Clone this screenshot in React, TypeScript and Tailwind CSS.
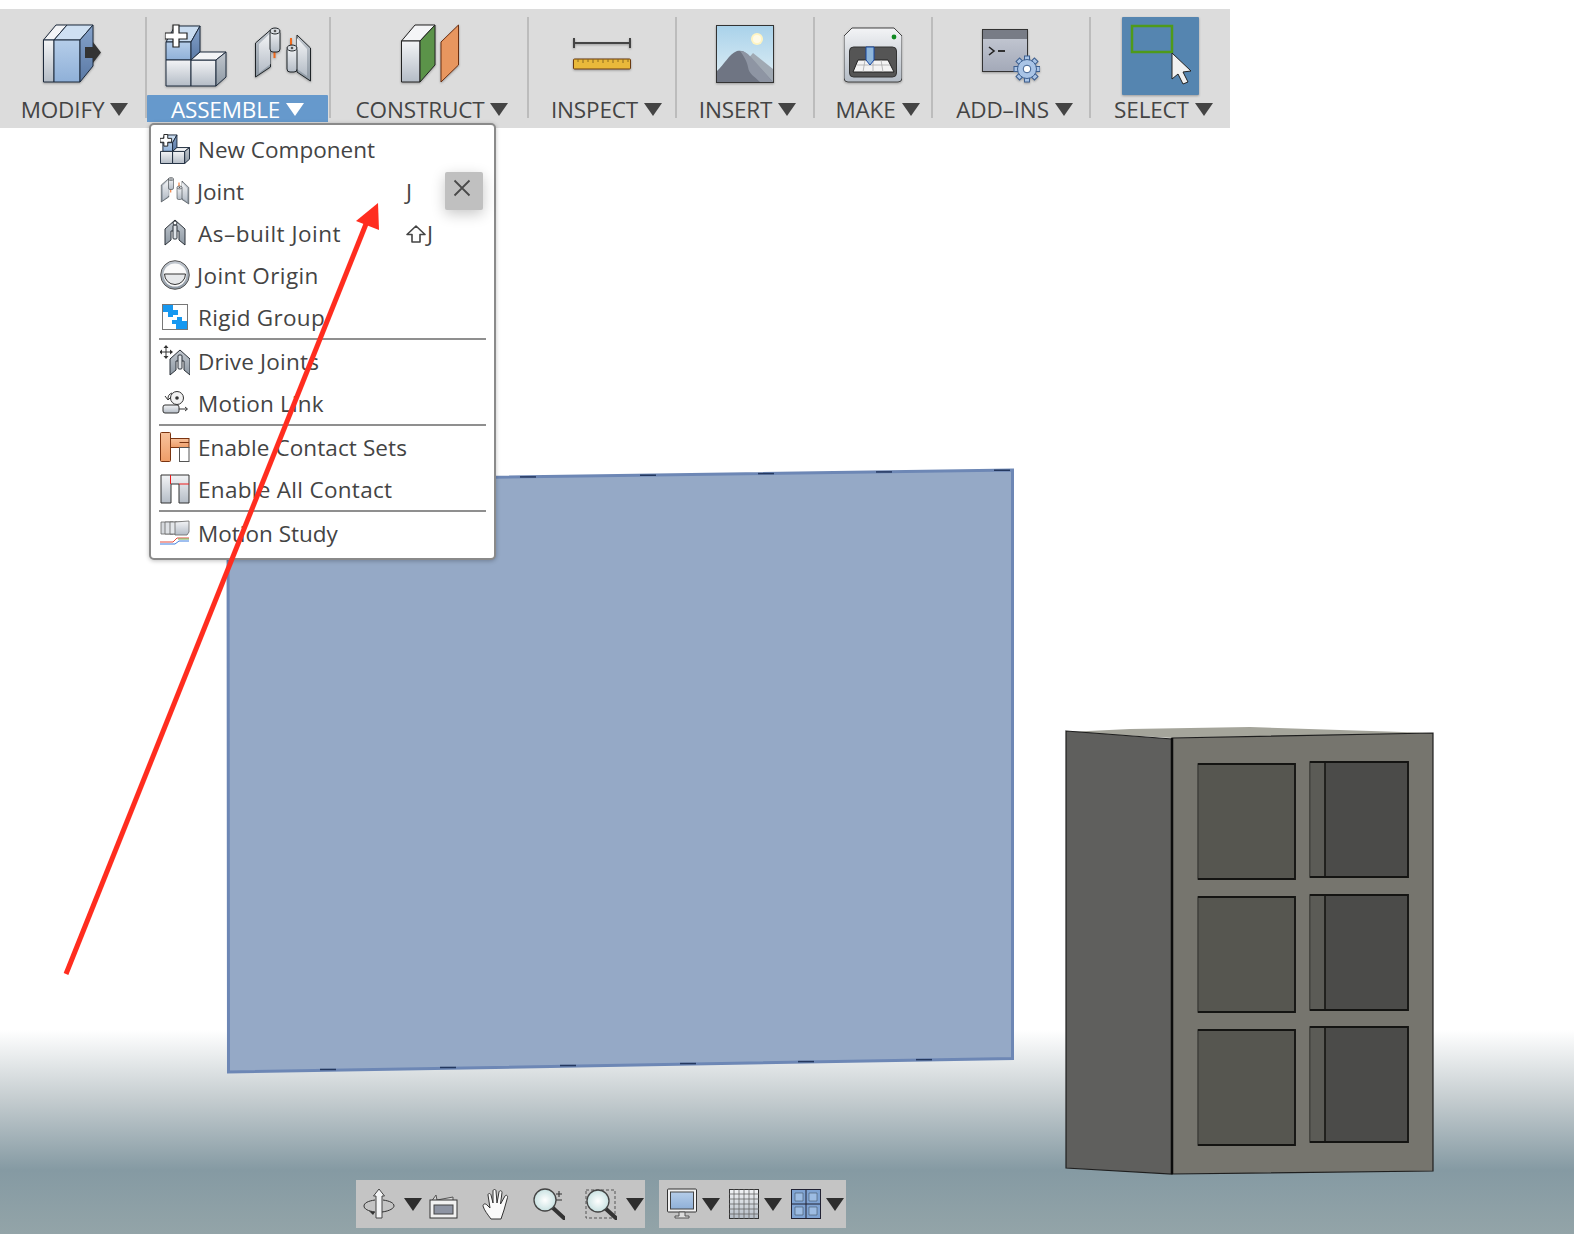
import type { ReactNode } from "react";

const labelFont = "font-['Open_Sans','Noto_Sans',sans-serif]";

function Defs() {
  return (
    <svg className="absolute h-0 w-0">
      <defs>
        <linearGradient id="steel" x1="0" y1="0" x2="0" y2="1">
          <stop offset="0" stopColor="#f3f4f6" />
          <stop offset="1" stopColor="#b4bcc6" />
        </linearGradient>
        <linearGradient id="steelSide" x1="0" y1="0" x2="0" y2="1">
          <stop offset="0" stopColor="#c2c8cf" />
          <stop offset="1" stopColor="#8d98a3" />
        </linearGradient>
        <linearGradient id="blueFace" x1="0" y1="0" x2="0" y2="1">
          <stop offset="0" stopColor="#b5cde9" />
          <stop offset="1" stopColor="#8fb0d8" />
        </linearGradient>
        <linearGradient id="blueSide" x1="0" y1="0" x2="0" y2="1">
          <stop offset="0" stopColor="#86a3cb" />
          <stop offset="1" stopColor="#5a79a5" />
        </linearGradient>
        <linearGradient id="sky" x1="0" y1="0" x2="0" y2="1">
          <stop offset="0" stopColor="#a9d2ea" />
          <stop offset="1" stopColor="#e0eff5" />
        </linearGradient>
        <linearGradient id="addin" x1="0" y1="0" x2="0" y2="1">
          <stop offset="0" stopColor="#c8ccd6" />
          <stop offset="1" stopColor="#a3a9b8" />
        </linearGradient>
        <linearGradient id="orange" x1="0" y1="0" x2="0" y2="1">
          <stop offset="0" stopColor="#f7c29c" />
          <stop offset="1" stopColor="#ee9d68" />
        </linearGradient>
        <radialGradient id="lens">
          <stop offset="0" stopColor="#ffffff" />
          <stop offset="1" stopColor="#c9e2e2" />
        </radialGradient>
      </defs>
    </svg>
  );
}

function Tri({ className = "" }: { className?: string }) {
  return (
    <svg width="18" height="13" viewBox="0 0 18 13" className={className}>
      <polygon points="0,0 18,0 9,13" fill="currentColor" />
    </svg>
  );
}

function Plates({ s = "#1f2428" }: { s?: string }) {
  return (
    <g stroke={s} strokeWidth="1" strokeLinejoin="round">
      <polygon points="0.5,26 15.5,13 15.5,50 0.5,60" fill="url(#steelSide)" />
      <polygon points="4,27 15.5,16 15.5,47 4,56" fill="url(#steel)" stroke="none" />
      <path d="M19.5 35v6" stroke="#f0691c" strokeWidth="2" />
      <rect x="15" y="13" width="10" height="22" rx="3" fill="url(#steel)" />
      <ellipse cx="20" cy="14" rx="5" ry="3" fill="#d9dde2" />
      <circle cx="20" cy="14" r="1.3" fill="#555" stroke="none" />
      <polygon points="42,18 55.5,31 55.5,64 42,55" fill="url(#steelSide)" />
      <polygon points="42,21 52,32 52,59 42,52" fill="url(#steel)" stroke="none" />
      <path d="M36 21v9" stroke="#f0691c" strokeWidth="2" />
      <rect x="32" y="30" width="10" height="25" rx="3" fill="url(#steel)" />
      <ellipse cx="37" cy="31" rx="5" ry="3" fill="#d9dde2" />
      <circle cx="37" cy="31" r="1.3" fill="#555" stroke="none" />
    </g>
  );
}

function ModifyIcon() {
  return (
    <svg width="60" height="78" viewBox="0 0 60 78">
      <g stroke="#1d2a3c" strokeWidth="1" strokeLinejoin="round">
        <polygon points="0.5,23 11,23 24,8 13,8" fill="#f4f5f7" />
        <rect x="0.5" y="23" width="10.5" height="42" fill="url(#steel)" />
        <polygon points="11,23 37,23 50,8 24,8" fill="#cfe0f2" />
        <rect x="11" y="23" width="26" height="42" fill="url(#blueFace)" />
        <polygon points="37,23 50,8 50,49 37,65" fill="url(#blueSide)" />
      </g>
      <polygon points="42,30 50,30 50,25 58,35.5 50,46 50,41 42,41" fill="#333" />
    </svg>
  );
}

function NewComponentIcon() {
  return (
    <svg width="62" height="78" viewBox="0 0 62 78">
      <g stroke="#1d2a3c" strokeWidth="1" strokeLinejoin="round">
        <polygon points="1,25 26,25 35,9 10,9" fill="#c9dcf0" />
        <rect x="1" y="25" width="25" height="18" fill="url(#blueFace)" />
        <polygon points="26,25 35,9 35,35 26,43" fill="url(#blueSide)" />
        <rect x="1" y="43" width="25" height="26" fill="url(#steel)" />
        <rect x="26" y="43" width="25" height="26" fill="url(#steel)" />
        <polygon points="26,43 35,35 61,35 51,43" fill="#f3f4f6" />
        <polygon points="51,43 61,35 61,60 51,69" fill="url(#steelSide)" />
      </g>
      <path d="M8 8h6v8h8v6h-8v8H8v-8H0v-6h8z" fill="#fff" stroke="#222" strokeWidth="1.2" />
    </svg>
  );
}

function JointIcon() {
  return (
    <svg width="56" height="78" viewBox="0 0 56 78">
      <Plates />
    </svg>
  );
}

function ConstructIcon() {
  return (
    <svg width="60" height="78" viewBox="-2 0 60 78">
      <g stroke="#222" strokeWidth="1" strokeLinejoin="round">
        <polygon points="0.5,24 19,24 34,8 14,8" fill="#f4f5f7" />
        <rect x="0.5" y="24" width="18.5" height="41" fill="url(#steel)" />
        <polygon points="19,24 34,8 34,48 19,65" fill="#5b9349" />
        <polygon points="40,25 57.5,8 57.5,48 40,65" fill="#e8965f" stroke="#6b2e10" />
      </g>
    </svg>
  );
}

function InspectIcon() {
  return (
    <svg width="58" height="78" viewBox="0 0 58 78">
      <path d="M1 21v10M57 21v10M1 26h56" stroke="#444" strokeWidth="2" fill="none" />
      <rect x="0.5" y="42" width="57" height="10" rx="1" fill="#e9b93a" stroke="#6b3a10" />
      <path
        d="M5 42v3M10 42v4M15 42v3M20 42v4M25 42v3M30 42v4M35 42v3M40 42v4M45 42v3M50 42v4M55 42v3"
        stroke="#8a6a20"
        strokeWidth="1"
      />
    </svg>
  );
}

function InsertIcon() {
  return (
    <svg width="58" height="78" viewBox="0 0 58 78">
      <rect x="0.5" y="8.5" width="57" height="57" fill="url(#sky)" stroke="#333" />
      <circle cx="41" cy="22" r="6" fill="#fff4c2" />
      <circle cx="41" cy="22" r="4" fill="#fffbe8" />
      <polygon points="30,44 37,36 57,52 57,65 46,65" fill="#a0a9b3" />
      <path d="M1 54c7-6 12-17 20-20 4-1 7 0 10 3l26 28H1z" fill="#6f7583" />
      <path d="M24 34c5 0 8 3 11 6l22 25H44c-6-6-11-8-12-15-1-6-5-12-8-16z" fill="#8e95a3" />
    </svg>
  );
}

function MakeIcon() {
  return (
    <svg width="58" height="78" viewBox="0 0 58 78">
      <path
        d="M8 11h42l8 8v42a4 4 0 0 1-4 4H4a4 4 0 0 1-4-4V19z"
        fill="url(#steel)"
        stroke="#444"
        strokeWidth="1"
      />
      <rect x="5.5" y="30" width="47" height="30" rx="4" fill="#555" stroke="#333" />
      <polygon points="14,43 44,43 50,55 9,55" fill="#f3f3f3" stroke="#222" />
      <path d="M13 48h33M21 43l-2 12M29 43v12M37 43l2 12" stroke="#aaa" strokeWidth="0.8" />
      <polygon points="22,30 30,30 30,43 26,48 22,43" fill="#8fb6da" stroke="#1746a0" strokeWidth="1" />
      <circle cx="50" cy="20" r="2.4" fill="#118a22" />
    </svg>
  );
}

function AddInsIcon() {
  const teeth = [0, 45, 90, 135, 180, 225, 270, 315];
  return (
    <svg width="58" height="78" viewBox="0 0 58 78">
      <rect x="0.5" y="12.5" width="45" height="42" fill="url(#addin)" stroke="#333" />
      <rect x="1" y="13" width="44" height="9" fill="#787c86" />
      <path d="M7 30l5 4-5 4" stroke="#222" strokeWidth="1.6" fill="none" />
      <path d="M16 34h7" stroke="#222" strokeWidth="1.8" />
      <g transform="translate(45 52)" fill="#a9c4e6" stroke="#3d5f8f" strokeWidth="1">
        {teeth.map((a) => (
          <rect key={a} x="-2.5" y="-13" width="5" height="6" transform={`rotate(${a})`} />
        ))}
        <circle r="9.5" />
        <circle r="3.8" fill="#fff" />
      </g>
    </svg>
  );
}

function SelectIcon() {
  return (
    <div className="h-[78px] w-[77px] rounded-[1px] bg-[#5585b0]">
      <svg width="77" height="78" viewBox="0 0 77 78">
        <rect x="10" y="9" width="40" height="26" fill="none" stroke="#4f9a1a" strokeWidth="2.5" />
        <path
          d="M50 36v26l6-5 5 10 5-2-5-10 8-1z"
          fill="#f1f1f1"
          stroke="#222"
          strokeWidth="1"
        />
      </svg>
    </div>
  );
}

function Group({
  className,
  nudge = "",
  label,
  active,
  first,
  children,
}: {
  className: string;
  nudge?: string;
  label: string;
  active?: boolean;
  first?: boolean;
  children: ReactNode;
}) {
  return (
    <div className={`relative flex shrink-0 flex-col ${className}`}>
      {!first && <div className="absolute left-[-1px] top-[8px] h-[101px] w-[2px] bg-[#bcbcbc]" />}
      <div className="mt-[8px] flex h-[78px] items-start justify-center gap-[28px] drop-shadow-[0_1px_1px_rgba(0,0,0,0.3)]">
        {children}
      </div>
      <div
        className={`ml-[1px] mr-[2px] flex h-[27px] items-center justify-center gap-[6px] rounded-t-[1px] pt-[4px] ${nudge} ${
          active ? "bg-[#6699cc] text-white" : "text-[#444]"
        }`}
      >
        <span className={`text-[22.5px] leading-none tracking-[-0.15px] ${labelFont}`}>{label}</span>
        <Tri className="mb-[3px]" />
      </div>
    </div>
  );
}

function Toolbar() {
  return (
    <div className="mt-[9px] flex h-[119px] w-[1230px] bg-[#dcdcdc]">
      <Group className="w-[146px]" nudge="pl-[4px]" label="MODIFY" first>
        <ModifyIcon />
      </Group>
      <Group className="w-[184px]" label="ASSEMBLE" active>
        <NewComponentIcon />
        <JointIcon />
      </Group>
      <Group className="w-[198px]" nudge="pl-[7px]" label="CONSTRUCT">
        <ConstructIcon />
      </Group>
      <Group className="w-[148px]" nudge="pl-[10px]" label="INSPECT">
        <InspectIcon />
      </Group>
      <Group className="w-[138px]" nudge="pl-[6px]" label="INSERT">
        <InsertIcon />
      </Group>
      <Group className="w-[118px]" nudge="pl-[10px]" label="MAKE">
        <MakeIcon />
      </Group>
      <Group className="w-[158px]" nudge="pl-[8px]" label="ADD–INS">
        <AddInsIcon />
      </Group>
      <Group className="w-[140px]" nudge="pl-[8px]" label="SELECT">
        <SelectIcon />
      </Group>
    </div>
  );
}

const miniStroke = { stroke: "#2b3138", strokeWidth: 1 };

function MiniNew() {
  return (
    <svg width="30" height="30" viewBox="0 0 62 62">
      <g stroke="#1d2a3c" strokeWidth="2" strokeLinejoin="round">
        <polygon points="1,18 26,18 35,2 10,2" fill="#c9dcf0" />
        <rect x="6" y="18" width="20" height="18" fill="url(#blueFace)" />
        <polygon points="26,18 35,2 35,28 26,36" fill="url(#blueSide)" />
        <rect x="1" y="36" width="25" height="25" fill="url(#steel)" />
        <rect x="26" y="36" width="25" height="25" fill="url(#steel)" />
        <polygon points="26,36 35,28 61,28 51,36" fill="#f3f4f6" />
        <polygon points="51,36 61,28 61,52 51,61" fill="url(#steelSide)" />
      </g>
      <path d="M8 1h8v8h8v8h-8v8H8v-8H0V9h8z" fill="#fff" stroke="#222" strokeWidth="2" />
    </svg>
  );
}

function MiniJoint() {
  return (
    <svg width="30" height="30" viewBox="0 8 56 60">
      <Plates />
    </svg>
  );
}

function MiniAsBuilt() {
  return (
    <svg width="26" height="30" viewBox="3 0 24 30">
      <g {...miniStroke} strokeLinejoin="round">
        <polygon points="5,11 15,2 25,11 25,27 19,22 19,13 11,13 11,22 5,27" fill="url(#steelSide)" />
        <rect x="13" y="7" width="4" height="14" rx="1" fill="#dfe3e7" />
        <circle cx="15" cy="5" r="2" fill="#fff" />
      </g>
    </svg>
  );
}

function MiniOrigin() {
  return (
    <svg width="30" height="30" viewBox="0 0 30 30">
      <circle cx="15" cy="15" r="14.3" fill="url(#steelSide)" stroke="#555" />
      <circle cx="15" cy="15" r="11.5" fill="#fafafa" />
      <path d="M4.500 14h21a10.500 10.500 0 0 1-21 0z" fill="#e6e8ea" stroke="#333" />
    </svg>
  );
}

function MiniRigid() {
  return (
    <svg width="28" height="28" viewBox="1 1 28 28">
      <rect x="2.5" y="2.5" width="25" height="25" fill="#fff" stroke="#777" />
      <path d="M3 3h10v5h5v5h-5v2H8v-5H3z" fill="#1798f0" />
      <path d="M27 27H16v-5h-4v-4h5v-3h5v4h5z" fill="#1798f0" />
    </svg>
  );
}

function MiniDrive() {
  return (
    <svg width="30" height="32" viewBox="0 0 30 32">
      <path d="M6 2v10M1 7h10" stroke="#333" strokeWidth="1" />
      <path d="M6 0l2.5 3h-5zM6 14l2.500-3h-5zM-1 7l3-2.500v5zM13 7l-3-2.500v5z" fill="#333" />
      <g {...miniStroke} strokeLinejoin="round">
        <polygon points="10,14 20,5 30,14 30,30 24,25 24,16 16,16 16,25 10,30" fill="url(#steelSide)" />
        <rect x="18" y="10" width="4" height="14" rx="1" fill="#dfe3e7" />
      </g>
    </svg>
  );
}

function MiniLink() {
  return (
    <svg width="28" height="26" viewBox="0 0 28 26">
      <circle cx="16" cy="8" r="6.5" fill="#f2f2f2" stroke="#333" />
      <circle cx="16" cy="8" r="1.8" fill="#333" />
      <path d="M7 9a6 6 0 0 1 4-6M4 6l3 4 3-3" stroke="#333" fill="none" />
      <rect x="2" y="15" width="16" height="8" rx="2" fill="url(#steel)" stroke="#333" />
      <path d="M18 19h8M24 17l2.500 2-2.500 2" stroke="#333" fill="none" />
    </svg>
  );
}

function MiniContact() {
  return (
    <svg width="30" height="30" viewBox="0 0 30 30">
      <rect x="9" y="6.5" width="20" height="9" fill="url(#orange)" stroke="#7a3410" />
      <rect x="19.5" y="15.5" width="9.5" height="14" fill="#fff" stroke="#555" />
      <path d="M19.5 10.5H29" stroke="#7a3410" />
      <rect x="0.5" y="0.5" width="10" height="29" rx="1" fill="url(#orange)" stroke="#7a3410" />
    </svg>
  );
}

function MiniAllContact() {
  return (
    <svg width="30" height="30" viewBox="0 0 30 30">
      <path d="M1 1h28v28H19V10h-8v19H1z" fill="url(#steel)" stroke="#333" strokeLinejoin="round" />
      <path d="M10.5 1v9M19 10h10" stroke="#ee1c1c" strokeWidth="1" />
    </svg>
  );
}

function MiniStudy() {
  return (
    <svg width="30" height="26" viewBox="0 0 30 26">
      <g stroke="#666" strokeWidth="0.8" strokeLinejoin="round">
        <rect x="1" y="2" width="12" height="12" fill="#d6d9dd" />
        <rect x="5" y="2" width="12" height="12" fill="#dee1e5" />
        <rect x="10" y="2" width="12" height="12" fill="#e4e7ea" />
        <polygon points="15,2 29,1 29,12 27,15 15,15" fill="url(#steel)" />
      </g>
      <path d="M0 22h13l4-4h12" stroke="#e54b3c" fill="none" />
      <path d="M0 24h15l4-3h10" stroke="#3f7fe0" fill="none" />
      <path d="M18 19h11" stroke="#6cae4a" />
    </svg>
  );
}

function ShiftKey() {
  return (
    <svg width="20" height="18" viewBox="0 0 20 18" className="mr-[1px]">
      <path d="M10 1l9 8.500h-5V17H6V9.500H1z" fill="none" stroke="#444" strokeWidth="1.6" strokeLinejoin="round" />
    </svg>
  );
}

type Row = { label: string; icon: ReactNode; shortcut?: ReactNode; tight?: boolean; track?: string };

const sections: Row[][] = [
  [
    { label: "New Component", icon: <MiniNew /> },
    { label: "Joint", icon: <MiniJoint />, shortcut: "J", tight: true },
    {
      label: "As–built Joint",
      icon: <MiniAsBuilt />,
      track: "tracking-[0.5px]",
      shortcut: (
        <>
          <ShiftKey />J
        </>
      ),
    },
    { label: "Joint Origin", icon: <MiniOrigin />, tight: true, track: "tracking-[0.4px]" },
    { label: "Rigid Group", icon: <MiniRigid />, track: "tracking-[0.3px]" },
  ],
  [
    { label: "Drive Joints", icon: <MiniDrive />, track: "tracking-[0.2px]" },
    { label: "Motion Link", icon: <MiniLink />, track: "tracking-[0.2px]" },
  ],
  [
    { label: "Enable Contact Sets", icon: <MiniContact />, track: "tracking-[0.1px]" },
    { label: "Enable All Contact", icon: <MiniAllContact />, track: "tracking-[0.3px]" },
  ],
  [{ label: "Motion Study", icon: <MiniStudy /> }],
];

function AssembleMenu() {
  return (
    <div
      className={`absolute left-[149px] top-[123px] w-[347px] rounded-[5px] border-2 border-[#8a8a8a] bg-white pb-[4px] pt-[3px] text-[22.5px] text-[#444] shadow-[0_1px_4px_rgba(0,0,0,0.25)] ${labelFont}`}
    >
      {sections.map((rows, i) => (
        <div key={i} className={i > 0 ? "mx-[8px] border-t-2 border-[#8f8f8f]" : "mx-[8px]"}>
          {rows.map((row) => (
            <div key={row.label} className="relative flex h-[42px] items-center">
              <div className="flex w-[32px] shrink-0 items-center justify-center">{row.icon}</div>
              <span
                className={`${row.tight ? "ml-[6px]" : "ml-[7px]"} mt-[2px] whitespace-nowrap leading-none ${row.track ?? ""}`}
              >
                {row.label}
              </span>
              {row.shortcut && (
                <span className="absolute left-[247px] top-[5px] flex items-center">{row.shortcut}</span>
              )}
            </div>
          ))}
        </div>
      ))}
      <div className="absolute left-[294px] top-[47px] flex h-[38px] w-[38px] items-center justify-center rounded-[2px] bg-[#c0c0c0] pb-[6px] pr-[4px] shadow-[0_4px_14px_rgba(0,0,0,0.22)]">
        <svg width="18" height="18" viewBox="0 0 18 18">
          <path d="M1.5 1.5l15 15M16.5 1.5l-15 15" stroke="#4a4a4a" strokeWidth="1.8" />
        </svg>
      </div>
    </div>
  );
}

function BluePlate() {
  const ticks = [520, 640, 758, 876, 994];
  const lows = [320, 440, 560, 680, 798, 916];
  return (
    <svg className="absolute left-[220px] top-[460px]" width="800" height="620" viewBox="220 460 800 620">
      <polygon
        points="228,481 1012.500,470 1012.500,1058.500 228.500,1072"
        fill="#95a9c6"
        stroke="#6d87b5"
        strokeWidth="3"
      />
      {ticks.map((x) => (
        <path key={x} d={`M${x} ${481 - (x - 228) * 0.014}h16`} stroke="#24385f" strokeWidth="1.5" />
      ))}
      {lows.map((x) => (
        <path key={x} d={`M${x} ${1071 - (x - 228) * 0.0165}h16`} stroke="#24385f" strokeWidth="1.5" />
      ))}
    </svg>
  );
}

function Cabinet() {
  const left = [
    [1198, 764],
    [1198, 897],
    [1198, 1030],
  ];
  const right = [
    [1310, 762],
    [1310, 895],
    [1310, 1027],
  ];
  return (
    <svg className="absolute left-[1060px] top-[722px]" width="380" height="460" viewBox="1060 722 380 460">
      <polygon points="1067,732 1130,729 1250,727 1433,733 1173,738" fill="#a5a59b" />
      <polygon points="1066,731 1172,739 1172,1174 1066,1168" fill="#5f5f5d" stroke="#1e1e1e" strokeWidth="1.2" />
      <polygon points="1172,738 1433,733 1433,1171 1172,1174" fill="#76756e" stroke="#1e1e1e" strokeWidth="1.2" />
      <path d="M1172 738v436" stroke="#0b0b0b" strokeWidth="2.5" />
      {left.map(([x, y]) => (
        <g key={y}>
          <rect x={x} y={y} width="97" height="115" fill="#565650" stroke="#3f3f3b" strokeWidth="1.5" />
          <path d={`M${x} ${y}h97v115H${x}`} fill="none" stroke="#141412" strokeWidth="1.8" />
        </g>
      ))}
      {right.map(([x, y]) => (
        <g key={y}>
          <rect x={x} y={y} width="98" height="115" fill="#4b4b49" stroke="#3f3f3b" strokeWidth="1.5" />
          <rect x={x} y={y} width="15" height="115" fill="#5b5b56" stroke="#3f3f3b" strokeWidth="1" />
          <path d={`M${x + 15} ${y}v115`} stroke="#141412" strokeWidth="1.5" />
          <path d={`M${x} ${y}h98v115H${x}`} fill="none" stroke="#141412" strokeWidth="1.8" />
        </g>
      ))}
    </svg>
  );
}

function RedArrow() {
  return (
    <svg className="pointer-events-none absolute left-[60px] top-[195px]" width="330" height="785" viewBox="60 195 330 785">
      <path d="M66 974L366 224" stroke="#ff2d1f" strokeWidth="5" fill="none" />
      <polygon points="378,203 379,230 356,221" fill="#ff2d1f" />
    </svg>
  );
}

function Lens({ cx, cy }: { cx: number; cy: number }) {
  return (
    <g>
      <path d={`M${cx + 8} ${cy + 8}l12 11`} stroke="#333" strokeWidth="4" strokeLinecap="round" />
      <circle cx={cx} cy={cy} r="11" fill="url(#lens)" stroke="#444" strokeWidth="1.3" />
    </g>
  );
}

function NavBars() {
  return (
    <div className="absolute left-[356px] top-[1180px] flex gap-[14px] text-[#2e2e2e]">
      <div className="flex h-[48px] w-[289px] items-center bg-[#c4c4c4] pl-[7px]">
        <svg width="32" height="32" viewBox="0 0 32 32">
          <path d="M16 1l5.500 7H19v22h-6V8h-2.500z" fill="#f3f4f5" stroke="#444" />
          <path d="M12 24C5 23 1 21 1 18s4-5 11-6M20 12c7 1 11 3 11 6 0 2-4 5-12 6" fill="none" stroke="#333" />
          <path d="M12 24l-6-1 4 4" fill="#333" />
        </svg>
        <Tri className="ml-[9px]" />
        <svg width="30" height="30" viewBox="0 0 30 30" className="ml-[7px]">
          <path d="M2 13l5-7 1 5 16-3v5" fill="#d7d7d7" stroke="#555" />
          <rect x="1" y="11" width="27" height="18" fill="#f1f1f1" stroke="#333" />
          <rect x="5" y="16" width="19" height="9" fill="#8e94a3" stroke="#444" />
        </svg>
        <svg width="30" height="32" viewBox="0 0 30 32" className="ml-[23px]">
          <path
            d="M9 31C6 27 2 22 1 18c0-2 2-3 4-1l3 3L6 7c0-2 2.500-2 3 0l2 8V3c0-2 3-2 3 0l1 12 2-11c.5-2 3-1.500 3 .5L18.500 16 23 8c1-1.500 3-.5 2.500 1.500L22 22c-1 3-2 6-3 9z"
            fill="#fafafa"
            stroke="#333"
            strokeWidth="1"
            strokeLinejoin="round"
          />
        </svg>
        <svg width="32" height="32" viewBox="0 0 32 32" className="ml-[21px]">
          <Lens cx={12} cy={12} />
          <path d="M26 3v6M23 6h6M23 12h6" stroke="#333" strokeWidth="1.1" />
        </svg>
        <svg width="32" height="32" viewBox="0 0 32 32" className="ml-[20px]">
          <rect x="1" y="2" width="29" height="28" fill="none" stroke="#555" strokeDasharray="3 2" />
          <Lens cx={13} cy={13} />
        </svg>
        <Tri className="ml-[9px]" />
      </div>
      <div className="flex h-[48px] w-[187px] items-center bg-[#c4c4c4] pl-[8px]">
        <svg width="30" height="32" viewBox="0 0 30 32">
          <rect x="0.5" y="1" width="29" height="23" rx="1" fill="#f1f1f1" stroke="#333" />
          <rect x="3.5" y="4" width="23" height="17" fill="url(#blueFace)" stroke="#444" />
          <path d="M12 24h6v4h4v2H8v-2h4z" fill="#ddd" stroke="#555" />
        </svg>
        <Tri className="ml-[5px]" />
        <svg width="30" height="30" viewBox="0 0 30 30" className="ml-[9px]">
          <rect x="0.5" y="0.5" width="29" height="29" fill="url(#steel)" stroke="#333" />
          <path
            d="M5 0v30M10 0v30M15 0v30M20 0v30M25 0v30M0 5h30M0 10h30M0 15h30M0 20h30M0 25h30"
            stroke="#666"
            strokeWidth="0.8"
          />
        </svg>
        <Tri className="ml-[5px]" />
        <svg width="30" height="30" viewBox="0 0 30 30" className="ml-[9px]">
          <rect x="0.5" y="0.5" width="29" height="29" fill="#7fa3d3" stroke="#223" />
          <path d="M15 0v30M0 15h30" stroke="#223" />
          <path d="M4 4h8v8H4zM18 4h8v8h-8zM4 18h8v8H4zM18 18h8v8h-8z" fill="#9dbce3" stroke="#456" strokeWidth="0.6" />
        </svg>
        <Tri className="ml-[5px]" />
      </div>
    </div>
  );
}

export default function App() {
  return (
    <div className="relative h-[1234px] w-[1574px] overflow-hidden bg-[linear-gradient(to_bottom,#ffffff_0,#ffffff_1030px,#c4cccf_1100px,#859aa3_1170px,#93a4a8_1234px)]">
      <Defs />
      <Toolbar />
      <BluePlate />
      <Cabinet />
      <AssembleMenu />
      <RedArrow />
      <NavBars />
    </div>
  );
}
